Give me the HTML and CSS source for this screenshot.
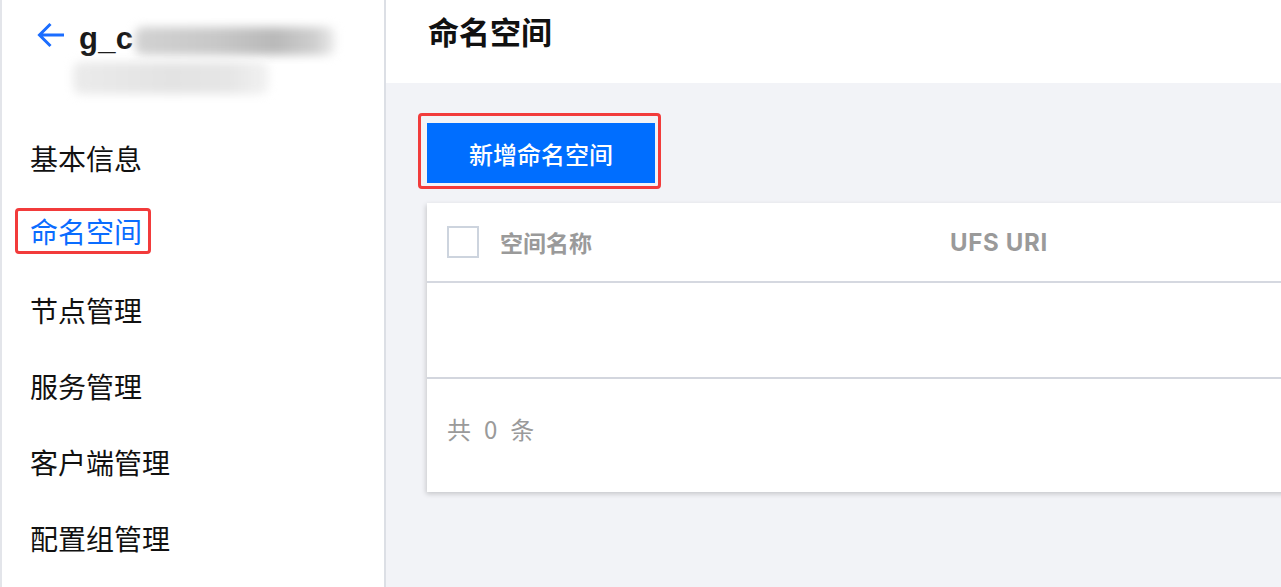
FILE: index.html
```html
<!DOCTYPE html>
<html lang="zh-CN">
<head>
<meta charset="utf-8">
<title>命名空间</title>
<link rel="stylesheet" href="styles.css">
</head>
<body>
<div class="app">
  <aside class="sidebar">
    <div class="ws-head">
      <div class="ws-row">
        <svg class="back" width="28" height="28" viewBox="0 0 28 28" aria-hidden="true">
          <path d="M27 13H2.5M13.5 2L2.5 13L13.5 24" fill="none" stroke="#1b6dff" stroke-width="3" stroke-linecap="butt" stroke-linejoin="miter"/>
        </svg>
        <span class="ws-name">g_c</span>
        <span class="blur blur-a"></span>
      </div>
      <span class="blur blur-b"></span>
    </div>
    <nav class="menu">
      <div class="menu-item"><span class="menu-label">基本信息</span></div>
      <div class="menu-item active"><span class="menu-label">命名空间</span></div>
      <div class="menu-item"><span class="menu-label">节点管理</span></div>
      <div class="menu-item"><span class="menu-label">服务管理</span></div>
      <div class="menu-item"><span class="menu-label">客户端管理</span></div>
      <div class="menu-item"><span class="menu-label">配置组管理</span></div>
    </nav>
  </aside>
  <main class="main">
    <header class="page-head">命名空间</header>
    <section class="content">
      <div class="btn-wrap"><button class="btn-primary">新增命名空间</button></div>
      <div class="card">
        <div class="t-head">
          <span class="checkbox"></span>
          <span class="col col-name">空间名称</span>
          <span class="col col-uri">UFS URI</span>
        </div>
        <div class="t-empty"></div>
        <div class="t-foot"><span>共</span><span>0</span><span>条</span></div>
      </div>
    </section>
  </main>
</div>
</body>
</html>
```
FILE: styles.css
```css
* { box-sizing: border-box; }
html, body { margin: 0; padding: 0; }
body {
  width: 1281px;
  height: 587px;
  overflow: hidden;
  font-family: "Noto Sans CJK SC", "Liberation Sans", sans-serif;
  background: #f2f3f7;
}
.app {
  display: flex;
  height: 587px;
}
.sidebar {
  width: 386px;
  flex: none;
  background: #fff;
  border-left: 2px solid #e3e5ea;
  border-right: 2px solid #dcdfe5;
}
.ws-head {
  height: 120px;
  padding: 22px 0 0 35px;
}
.ws-row {
  display: flex;
  align-items: flex-start;
  height: 36px;
}
.back { flex: none; display: block; }
.ws-name {
  margin-left: 14px;
  font-family: "Liberation Sans", Arial, sans-serif;
  font-weight: 700;
  font-size: 31px;
  line-height: 34px;
  color: #1a1a1a;
  letter-spacing: 0.3px;
}
.blur {
  display: block;
  filter: blur(5px);
  border-radius: 8px;
}
.blur-a {
  margin-top: 5px;
  margin-left: 2px;
  width: 200px;
  height: 28px;
  background: linear-gradient(90deg, #d2d2d2 0%, #c8c8c8 40%, #b9b9b9 70%, #cfcfcf 90%, #ececec 100%);
}
.blur-b {
  margin-top: 4px;
  margin-left: 36px;
  width: 196px;
  height: 32px;
  background: linear-gradient(90deg, #ebebeb 0%, #e3e3e3 50%, #e6e6e6 80%, #f2f2f2 100%);
}
.menu { display: flex; flex-direction: column; }
.menu-item {
  height: 76px;
  display: flex;
  align-items: center;
  padding-left: 28px;
  font-size: 28px;
  color: #111;
}
.menu-label { line-height: 36px; }
.menu-item.active .menu-label {
  color: #0a6cff;
  border: 3px solid #f23b3b;
  border-radius: 4px;
  padding: 2px 6px 2px 12px;
  margin-left: -15px;
  margin-top: -6px;
}
.main {
  flex: 1;
  display: flex;
  flex-direction: column;
  overflow: hidden;
}
.page-head {
  height: 83px;
  flex: none;
  background: #fff;
  padding: 11px 0 0 42px;
  font-size: 31px;
  font-weight: 700;
  line-height: 40px;
  color: #111;
}
.content {
  flex: 1;
  background: #f2f3f7;
  padding: 30px 0 0 41px;
}
.btn-wrap {
  display: inline-block;
  margin-left: -9px;
  border: 3px solid #f23b3b;
  border-radius: 4px;
  padding: 7px 3px 3px 6px;
}
.btn-primary {
  display: block;
  width: 228px;
  height: 60px;
  border: 0;
  background: #006eff;
  color: #fff;
  font-family: "Noto Sans CJK SC", sans-serif;
  font-size: 24px;
  font-weight: 500;
  padding: 0;
}
.card {
  margin-top: 14px;
  width: 1000px;
  background: #fff;
  box-shadow: -1px 2px 5px rgba(0, 0, 0, 0.18);
}
.t-head {
  height: 80px;
  display: flex;
  align-items: center;
  padding-left: 20px;
  border-bottom: 2px solid #d5d8e0;
}
.checkbox {
  width: 32px;
  height: 32px;
  border: 2px solid #cdd4de;
  flex: none;
}
.col {
  font-family: "Inter", "Noto Sans CJK SC", sans-serif;
  font-weight: 700;
  color: #9a9a9a;
}
.col-name {
  font-size: 23px;
  margin-left: 21px;
  width: 450px;
  flex: none;
}
.col-uri {
  font-size: 24px;
  letter-spacing: 0.7px;
}
.t-empty {
  height: 96px;
  border-bottom: 2px solid #d3d6de;
}
.t-foot {
  height: 113px;
  display: flex;
  align-items: flex-start;
  gap: 13px;
  padding: 33px 0 0 20px;
  font-size: 24px;
  line-height: 34px;
  color: #9a9a9a;
}
```
